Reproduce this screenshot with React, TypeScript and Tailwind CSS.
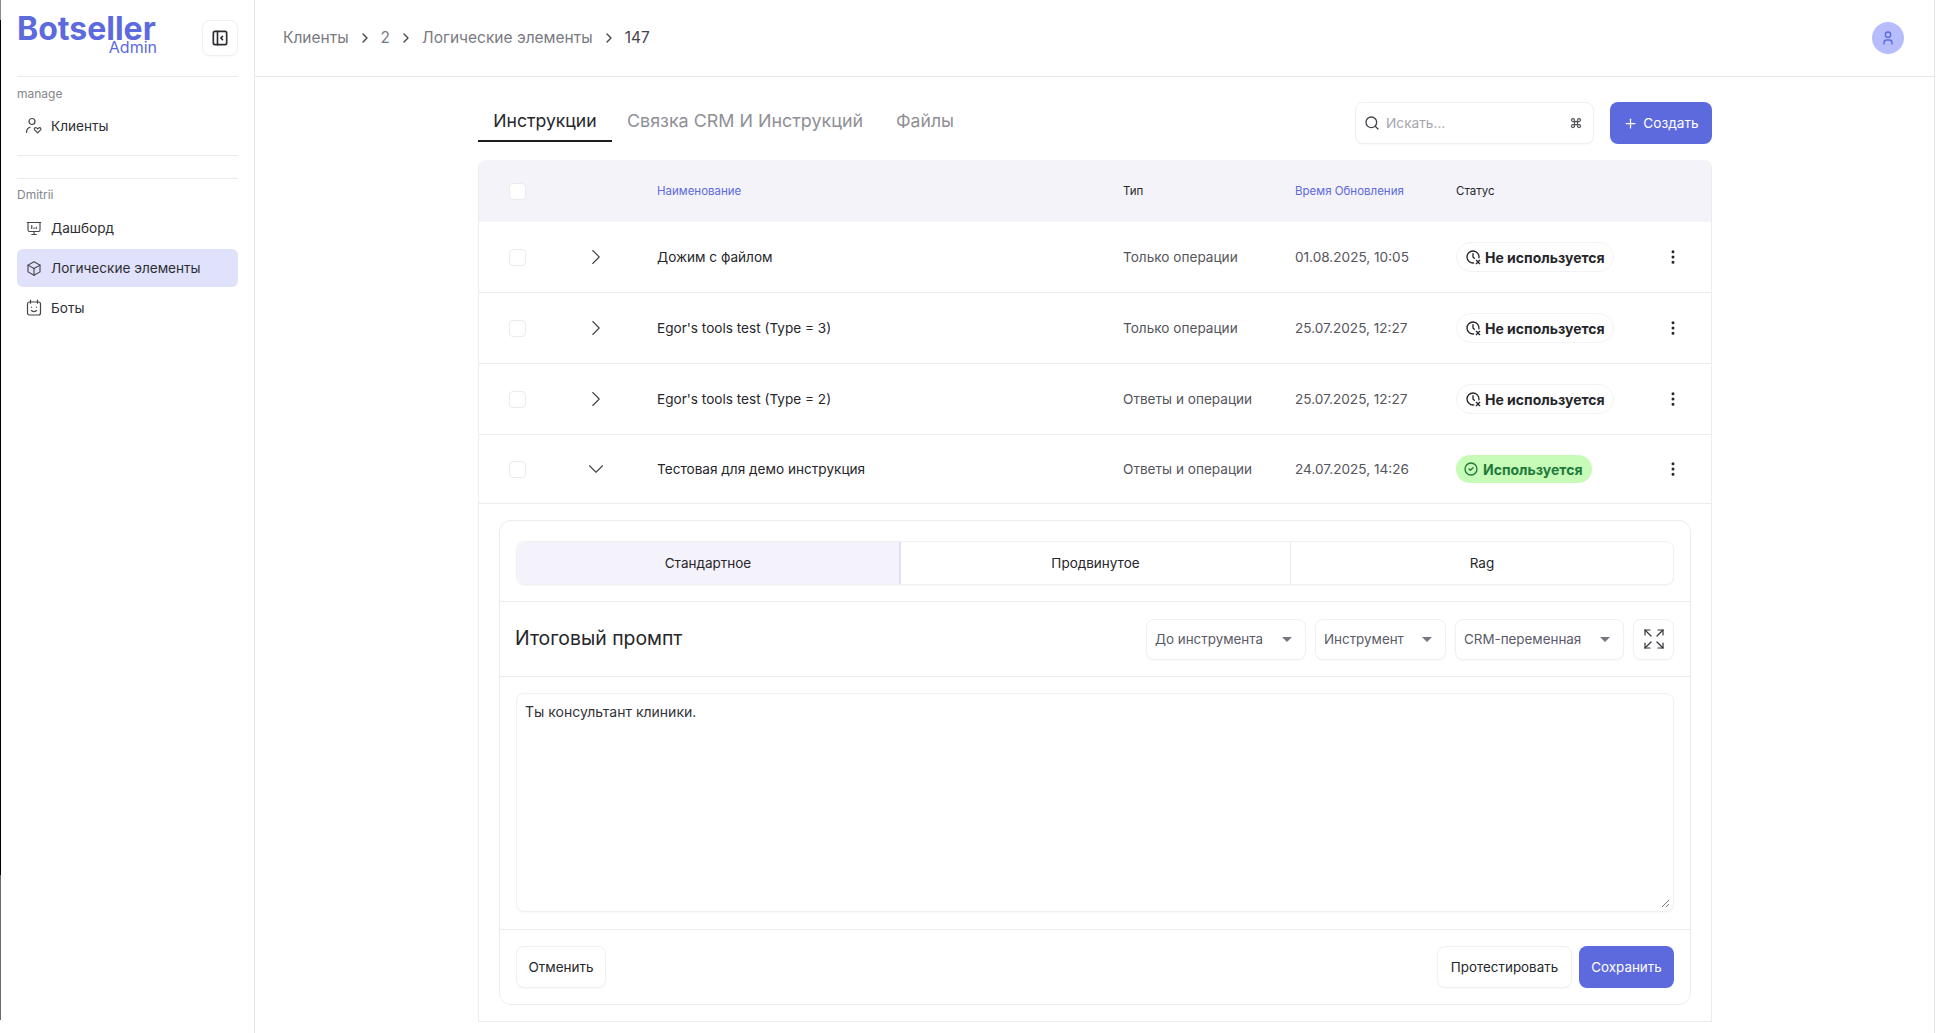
import { ChevronDown, ChevronRight, Command, EllipsisVertical, Expand, Plus, Search } from 'lucide-react';
import { TbBox, TbCircleCheck, TbClockX, TbLayoutSidebarLeftCollapse, TbPresentationAnalytics, TbUser } from 'react-icons/tb';

const font = { fontFamily: 'Inter, "Liberation Sans", sans-serif' };

const ClientIcon = () => (
  <svg width="18" height="18" viewBox="0 0 18 18" fill="none" stroke="currentColor" strokeWidth="1.2" strokeLinecap="round" strokeLinejoin="round">
    <circle cx="7" cy="4.5" r="3" />
    <path d="M1.5 15.5c0-2.6 1.2-4.6 3.5-5.3" />
    <path d="M12.6 15.8l-3-3c-.9-1 .1-2.4 1.4-2 .7.2 1.2.5 1.6 1 .4-.5 .9-.8 1.6-1 1.3-.4 2.3 1 1.4 2z" />
  </svg>
);

const BotIcon = () => (
  <svg width="18" height="18" viewBox="0 0 18 18" fill="none" stroke="currentColor" strokeWidth="1.2" strokeLinecap="round" strokeLinejoin="round">
    <rect x="2.5" y="3" width="13" height="13" rx="2" />
    <path d="M5.5 1.2v3M12.5 1.2v3" />
    <path d="M6.5 8v.2M11.5 8v.2" />
    <path d="M6.5 11.5c1.4 1.2 3.6 1.2 5 0" />
  </svg>
);

const NavItem = ({ icon, label, active }: { icon: React.ReactNode; label: string; active?: boolean }) => (
  <div className={`flex h-[38px] items-center gap-[8px] rounded-md pl-[8px] text-[13.6px] text-[#2d2d33] ${active ? 'bg-[#e0e1fa]' : ''}`}>
    <span className="flex w-[18px] justify-center text-[#44444c]">{icon}</span>
    {label}
  </div>
);

const Sidebar = () => (
  <aside className="flex h-full w-[254px] shrink-0 flex-col border-r border-[#e8e8ec] pl-[16px] pr-[16px]">
    <div className="flex h-[76px] items-start justify-between pt-[20px]">
      <div className="flex w-[140px] flex-col items-end text-[#5d6ade]">
        <span className="mt-[-3px] self-start text-[32px] font-bold leading-[24px]">Botseller</span>
        <span className="text-[16px] leading-[12px]">Admin</span>
      </div>
      <button className="flex h-[36px] w-[36px] items-center justify-center rounded-lg border border-[#f0f0f3] bg-white text-[#2d2d33] shadow-[0_1px_2px_rgba(0,0,0,0.03)]">
        <TbLayoutSidebarLeftCollapse size={20} />
      </button>
    </div>
    <div className="border-t border-[#ececef]" />
    <div className="pt-[9px] text-[12px] leading-[16px] text-[#85858c]">manage</div>
    <div className="mt-[5px]">
      <NavItem icon={<ClientIcon />} label="Клиенты" />
    </div>
    <div className="mt-[10px] border-t border-[#ececef]" />
    <div className="mt-[22px] border-t border-[#ececef]" />
    <div className="pt-[8px] text-[12px] leading-[16px] text-[#85858c]">Dmitrii</div>
    <div className="mt-[6px] flex flex-col gap-[2px]">
      <NavItem icon={<TbPresentationAnalytics size={19} strokeWidth={1.5} />} label="Дашборд" />
      <NavItem active icon={<TbBox size={19} strokeWidth={1.5} />} label="Логические элементы" />
      <NavItem icon={<BotIcon />} label="Боты" />
    </div>
  </aside>
);

const Breadcrumbs = () => {
  const items = ['Клиенты', '2', 'Логические элементы'];
  return (
    <div className="flex items-center text-[15.5px] text-[#7a7a82]">
      {items.map((item) => (
        <div key={item} className="flex items-center">
          <span>{item}</span>
          <ChevronRight size={16} className="mx-[8px] text-[#44444c]" />
        </div>
      ))}
      <span className="text-[#44444c]">147</span>
    </div>
  );
};

const Toolbar = () => (
  <div className="flex h-[66px] items-start">
    <div className="flex h-[66px] items-start pt-[29px] text-[17.6px]">
      <div className="h-[36px] w-[134px] border-b-2 border-[#1c1c20] text-center leading-[30px] text-[#26262b]">Инструкции</div>
      <div className="w-[266px] text-center text-[17.9px] leading-[30px] text-[#8f8f96]">Связка CRM И Инструкций</div>
      <div className="w-[94px] text-center leading-[30px] text-[#8f8f96]">Файлы</div>
    </div>
    <div className="ml-auto mt-[25px] flex items-center">
      <div className="flex h-[42px] w-[239px] items-center rounded-lg border border-[#f0f0f3] bg-white pl-[8px] pr-[11px] text-[13.7px] text-[#a6a6ad] shadow-[0_1px_2px_rgba(0,0,0,0.03)]">
        <Search size={16} className="text-[#44444c]" />
        <span className="ml-[6px]">Искать...</span>
        <Command size={12} strokeWidth={2.5} className="ml-auto text-[#55555c]" />
      </div>
      <button className="ml-[16px] flex h-[42px] w-[102px] items-center justify-center gap-[5px] rounded-lg bg-[#5d6ade] text-[13.7px] text-white">
        <Plus size={15} />
        Создать
      </button>
    </div>
  </div>
);

const rowGrid = 'grid grid-cols-[100px_78px_466px_172px_161px_162px_1fr] items-center';

const Checkbox = () => <div className="ml-[30px] h-[17px] w-[17px] rounded-[4px] border border-[#ebebee] bg-white" />;

const NotUsed = () => (
  <span className="inline-flex h-[30px] w-[158px] items-center gap-[4px] rounded-full border border-[#f3f3f6] bg-white pl-[8px] text-[14px] font-bold text-[#26262b]">
    <TbClockX size={16} />
    Не используется
  </span>
);

const Used = () => (
  <span className="inline-flex h-[28px] w-[136px] items-center gap-[4px] rounded-full bg-[#c6fbb8] pl-[7px] text-[14px] font-bold text-[#1f7a3a]">
    <TbCircleCheck size={16} />
    Используется
  </span>
);

const rows = [
  { name: 'Дожим с файлом', type: 'Только операции', date: '01.08.2025, 10:05' },
  { name: "Egor's tools test (Type = 3)", type: 'Только операции', date: '25.07.2025, 12:27' },
  { name: "Egor's tools test (Type = 2)", type: 'Ответы и операции', date: '25.07.2025, 12:27' },
];

const Row = ({ name, type, date, open }: { name: string; type: string; date: string; open?: boolean }) => (
  <div className={`${rowGrid} border-b border-[#ececef] text-[13.6px] ${open ? 'h-[69px]' : 'h-[71px]'}`}>
    <Checkbox />
    <div className="pl-[4px] text-[#44444c]">
      {open ? <ChevronDown size={26} strokeWidth={1} /> : <ChevronRight size={26} strokeWidth={1} />}
    </div>
    <div className="text-[#26262b]">{name}</div>
    <div className="text-[#55555c]">{type}</div>
    <div className="text-[#55555c]">{date}</div>
    <div>{open ? <Used /> : <NotUsed />}</div>
    <div className="pl-[46px] text-[#26262b]">
      <EllipsisVertical size={18} />
    </div>
  </div>
);

const SelectBox = ({ label, width }: { label: string; width: string }) => (
  <div className={`flex h-[41px] items-center justify-between rounded-lg border border-[#f0f0f3] bg-white pl-[8px] pr-[13px] text-[13.4px] text-[#5a5a68] shadow-[0_1px_2px_rgba(0,0,0,0.03)] ${width}`}>
    {label}
    <svg width="10" height="5" viewBox="0 0 10 5" className="text-[#77777f]">
      <path d="M0 0h10L5 5z" fill="currentColor" />
    </svg>
  </div>
);

const Details = () => (
  <div className="mx-[20px] mt-[16px] flex h-[485px] flex-col rounded-xl border border-[#ececef] bg-white">
    <div className="h-[81px] border-b border-[#ececef] px-[16px] pt-[20px]">
      <div className="flex h-[44px] rounded-lg border border-[#f0f0f3] text-[13.5px] text-[#26262b] shadow-[0_1px_2px_rgba(0,0,0,0.03)]">
        <div className="flex w-[384px] items-center justify-center rounded-l-lg border-r-2 border-[#dfe0f5] bg-[#f4f2fb]">Стандартное</div>
        <div className="flex w-[390px] items-center justify-center border-r border-[#ececef]">Продвинутое</div>
        <div className="flex flex-1 items-center justify-center">Rag</div>
      </div>
    </div>
    <div className="flex h-[75px] items-center border-b border-[#ececef] pl-[15px] pr-[16px]">
      <span className="text-[19.4px] text-[#26262b]">Итоговый промпт</span>
      <div className="ml-auto flex items-center gap-[9px]">
        <SelectBox label="До инструмента" width="w-[160px]" />
        <SelectBox label="Инструмент" width="w-[131px]" />
        <SelectBox label="CRM-переменная" width="w-[169px]" />
        <button className="flex h-[41px] w-[41px] items-center justify-center rounded-lg border border-[#f0f0f3] bg-white text-[#33333a] shadow-[0_1px_2px_rgba(0,0,0,0.03)]">
          <Expand size={24} strokeWidth={1.2} />
        </button>
      </div>
    </div>
    <div className="h-[253px] border-b border-[#ececef] px-[16px] pt-[16px]">
      <div className="relative h-[219px] rounded-lg border border-[#f0f0f3] bg-white px-[8px] py-[8px] text-[14px] leading-[20px] text-[#33333a] shadow-[0_1px_2px_rgba(0,0,0,0.03)]">
        Ты консультант клиники.
        <svg width="9" height="9" viewBox="0 0 9 9" className="absolute bottom-[3px] right-[3px] text-[#77777f]">
          <path d="M1 8l7-7M5 8l3-3" stroke="currentColor" strokeWidth="1" />
        </svg>
      </div>
    </div>
    <div className="flex flex-1 items-center px-[16px]">
      <button className="flex h-[42px] w-[90px] items-center justify-center rounded-lg border border-[#f0f0f3] bg-white text-[13.5px] text-[#26262b] shadow-[0_1px_2px_rgba(0,0,0,0.03)]">Отменить</button>
      <button className="ml-auto flex h-[42px] w-[135px] items-center justify-center rounded-lg border border-[#f0f0f3] bg-white text-[13.4px] text-[#26262b] shadow-[0_1px_2px_rgba(0,0,0,0.03)]">Протестировать</button>
      <button className="ml-[7px] flex h-[42px] w-[95px] items-center justify-center rounded-lg bg-[#5d6ade] text-[13.4px] text-white">Сохранить</button>
    </div>
  </div>
);

const Table = () => (
  <div className="mt-[17px] flex h-[862px] flex-col rounded-t-lg border-x border-b border-[#ececef]">
    <div className={`${rowGrid} h-[62px] shrink-0 rounded-t-lg bg-[#f5f3fa] pt-[1px] text-[11.5px] text-[#26262b]`}>
      <Checkbox />
      <div />
      <div className="text-[#5d6ade]">Наименование</div>
      <div>Тип</div>
      <div className="text-[#5d6ade]">Время Обновления</div>
      <div>Статус</div>
    </div>
    {rows.map((row) => (
      <Row key={row.name} {...row} />
    ))}
    <Row open name="Тестовая для демо инструкция" type="Ответы и операции" date="24.07.2025, 14:26" />
    <Details />
  </div>
);

export default function App() {
  return (
    <div className="flex h-screen overflow-hidden bg-white" style={font}>
      <div className="flex w-px shrink-0 flex-col">
        <div className="h-[20px] bg-[#8a8a8a]" />
        <div className="h-[855px] bg-black" />
        <div className="h-[145px] bg-[#6a6a6a]" />
      </div>
      <Sidebar />
      <div className="mr-[2px] flex min-w-0 flex-1 flex-col border-r border-[#e8e8ec]">
        <header className="flex h-[77px] shrink-0 items-center justify-between border-b border-[#e8e8ec] pl-[28px] pr-[30px]">
          <Breadcrumbs />
          <div className="flex h-[32px] w-[32px] items-center justify-center rounded-full bg-[#b6bdfa] text-[#5d6ade]">
            <TbUser size={16} />
          </div>
        </header>
        <main className="ml-[223px] w-[1234px]">
          <Toolbar />
          <Table />
        </main>
      </div>
    </div>
  );
}
